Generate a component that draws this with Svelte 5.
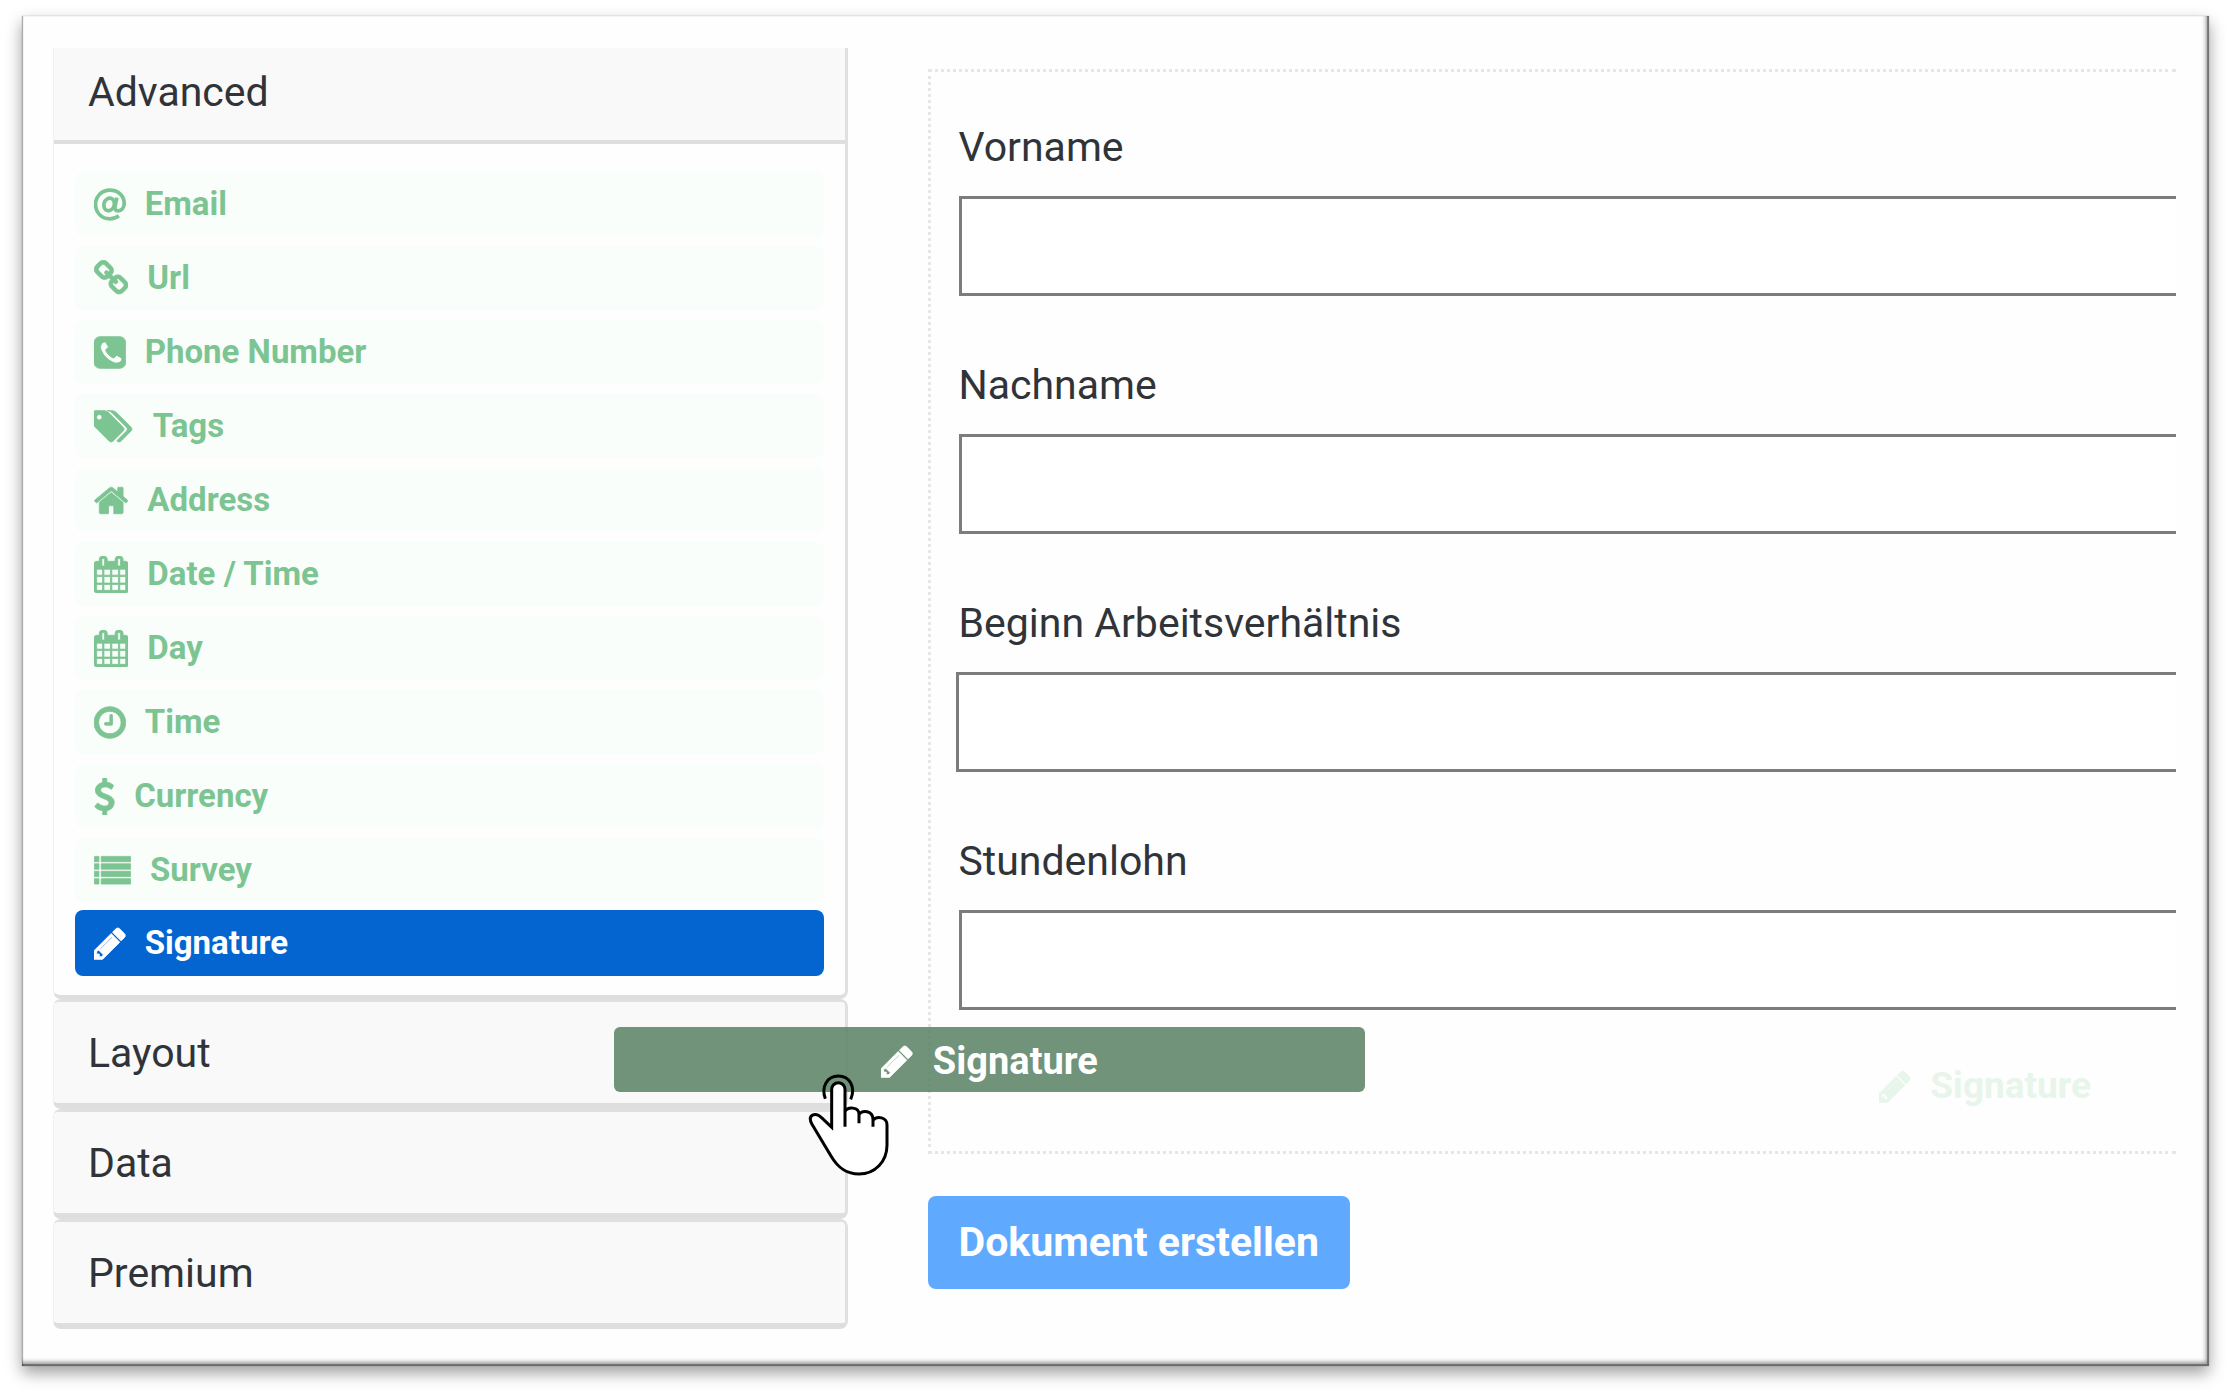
<script lang="ts">
  /** Form builder: component palette on the left, drop area on the right */

  interface Icon {
    box: string;
    path: string;
  }

  const calendar: Icon = {
    box: '64 0 1664 1792',
    path: 'M192 1664h288v-288h-288v288zm352 0h320v-288h-320v288zm-352-352h288v-320h-288v320zm352 0h320v-320h-320v320zm-352-384h288v-288h-288v288zm736 736h320v-288h-320v288zm-384-736h320v-288h-320v288zm768 736h288v-288h-288v288zm-384-352h320v-320h-320v320zm-352-864v-288q0-13-9.5-22.5t-22.5-9.5h-64q-13 0-22.5 9.5t-9.5 22.5v288q0 13 9.5 22.5t22.5 9.5h64q13 0 22.5-9.5t9.5-22.5zm736 864h288v-320h-288v320zm-384-384h320v-288h-320v288zm384 0h288v-288h-288v288zm32-480v-288q0-13-9.5-22.5t-22.5-9.5h-64q-13 0-22.5 9.5t-9.5 22.5v288q0 13 9.5 22.5t22.5 9.5h64q13 0 22.5-9.5t9.5-22.5zm384-64v1280q0 52-38 90t-90 38h-1408q-52 0-90-38t-38-90v-1280q0-52 38-90t90-38h128v-96q0-66 47-113t113-47h64q66 0 113 47t47 113v96h384v-96q0-66 47-113t113-47h64q66 0 113 47t47 113v96h128q52 0 90 38t38 90z',
  };

  const pencil: Icon = {
    box: '128 0 1536 1792',
    path: 'M491 1536l91-91-235-235-91 91v107h128v128h107zm523-928q0-22-22-22-10 0-17 7l-542 542q-7 7-7 17 0 22 22 22 10 0 17-7l542-542q7-7 7-17zm-54-192l416 416-832 832h-416v-416zm683 96q0 53-37 90l-166 166-416-416 166-165q36-38 90-38 53 0 91 38l235 234q37 39 37 91z',
  };

  // The at sign is stroked instead of filled, so it has no path here
  const at: Icon = { box: '128 0 1536 1792', path: '' };

  const link: Icon = {
    box: '64 0 1664 1792',
    path: 'M1520 1216q0-40-28-68l-208-208q-28-28-68-28-42 0-72 32 3 3 19 18.5t21.5 21.5 15 19 13 25.5 3.5 27.5q0 40-28 68t-68 28q-15 0-27.5-3.5t-25.5-13-19-15-21.5-21.5-18.5-19q-33 31-33 73 0 40 28 68l206 207q27 27 68 27 40 0 68-26l147-146q28-28 28-67zm-703-705q0-40-28-68l-206-207q-28-28-68-28-39 0-68 27l-147 146q-28 28-28 67 0 40 28 68l208 208q27 27 68 27 42 0 72-31-3-3-19-18.5t-21.5-21.5-15-19-13-25.5-3.5-27.5q0-40 28-68t68-28q15 0 27.5 3.5t25.5 13 19 15 21.5 21.5 18.5 19q33-31 33-73zm895 705q0 120-85 203l-147 146q-83 83-203 83-121 0-204-85l-206-207q-83-83-83-203 0-123 88-209l-88-88q-86 88-208 88-120 0-204-84l-208-208q-84-84-84-204t85-203l147-146q83-83 203-83 121 0 204 85l206 207q83 83 83 203 0 123-88 209l88 88q86-88 208-88 120 0 204 84l208 208q84 84 84 204z',
  };

  const phone: Icon = {
    box: '128 0 1536 1792',
    path: 'M1472 1193q0-11-2-16-3-8-38.5-29.5t-88.5-49.5l-53-29q-5-3-19-13t-25-15-21-5q-18 0-47 32.5t-57 65.5-44 33q-7 0-16.5-3.5t-15.5-6.5-17-9.5-14-8.5q-99-55-170.5-126.5t-126.5-170.5q-2-3-8.5-14t-9.5-17-6.5-15.5-3.5-16.5q0-13 20.5-33.5t45-38.5 45-39.5 20.5-36.5q0-10-5-21t-15-25-13-19q-3-6-15-28.5t-25-45.5-26.5-47.5-25-40.5-16.5-18-16-2q-48 0-101 22-46 21-80 94.5t-34 130.5q0 16 2.5 34t5 30.5 9 33 10 29.5 12.5 33 11 30q60 164 216.5 320.5t320.5 216.5q6 2 30 11t33 12.5 29.5 10 33 9 30.5 5 34 2.5q57 0 130.5-34t94.5-80q22-53 22-101zm192-777v960q0 119-84.5 203.5t-203.5 84.5h-960q-119 0-203.5-84.5t-84.5-203.5v-960q0-119 84.5-203.5t203.5-84.5h960q119 0 203.5 84.5t84.5 203.5z',
  };

  const tags: Icon = {
    box: '0 0 1920 1792',
    path: 'M384 448q0-53-37.5-90.5t-90.5-37.5-90.5 37.5-37.5 90.5 37.5 90.5 90.5 37.5 90.5-37.5 37.5-90.5zm1067 576q0 53-37 90l-491 492q-39 37-91 37-53 0-90-37l-715-716q-38-37-64.5-101t-26.5-117v-416q0-52 38-90t90-38h416q53 0 117 26.5t102 64.5l715 714q37 39 37 91zm384 0q0 53-37 90l-491 492q-39 37-91 37-36 0-59-14t-53-45l470-470q37-37 37-90 0-52-37-91l-715-714q-38-38-102-64.5t-117-26.5h224q53 0 117 26.5t102 64.5l715 714q37 39 37 91z',
  };

  const home: Icon = {
    box: '64 0 1664 1792',
    path: 'M1472 992v480q0 26-19 45t-45 19h-384v-384h-256v384h-384q-26 0-45-19t-19-45v-480q0-1 .5-3t.5-3l575-474 575 474q1 2 1 6zm223-69l-62 74q-8 9-21 11h-3q-13 0-21-7l-692-577-692 577q-12 8-24 7-13-2-21-11l-62-74q-8-10-7-23.5t11-21.5l719-599q32-26 76-26t76 26l244 204v-195q0-14 9-23t23-9h192q14 0 23 9t9 23v408l219 182q10 8 11 21.5t-7 23.5z',
  };

  const clock: Icon = {
    box: '128 0 1536 1792',
    path: 'M1024 544v448q0 14-9 23t-23 9h-320q-14 0-23-9t-9-23v-64q0-14 9-23t23-9h224v-352q0-14 9-23t23-9h64q14 0 23 9t9 23zm416 352q0-148-73-273t-198-198-273-73-273 73-198 198-73 273 73 273 198 198 273 73 273-73 198-198 73-273zm224 0q0 209-103 385.5t-279.5 279.5-385.5 103-385.5-103-279.5-279.5-103-385.5 103-385.5 279.5-279.5 385.5-103 385.5 103 279.5 279.5 103 385.5z',
  };

  const dollar: Icon = {
    box: '384 0 1024 1792',
    path: 'M1362 1185q0 153-99.5 263.5t-258.5 136.5v175q0 14-9 23t-23 9h-135q-13 0-22.5-9.5t-9.5-22.5v-175q-66-9-127.5-31t-101.5-44.5-74-48-46.5-37.5-17.5-18q-17-21-2-41l103-135q7-10 23-12 15-2 24 9l2 2q113 99 243 125 37 8 74 8 81 0 142.5-43t61.5-122q0-28-15-53t-33.5-42-58.5-37.5-66-32-80-32.5q-39-16-61.5-25t-61.5-26.5-62.5-31-56.5-35.5-53.5-42.5-43.5-49-35.5-58-21-66.5-8.5-78q0-138 98-242t255-134v-180q0-13 9.5-22.5t22.5-9.5h135q14 0 23 9t9 23v176q57 6 110.5 23t87 33.5 63.5 37.5 39 29 15 14q17 18 5 38l-81 146q-8 15-23 16-14 3-27-7-3-3-14.5-12t-39-26.5-58.5-32-74.5-26-85.5-11.5q-95 0-155 43t-60 111q0 26 8.5 48t29.5 41.5 39.5 33 56 31 60.5 27 70 27.5q53 20 81 31.5t76 35 75.5 42.5 62 50 53 63.5 31.5 76.5 13 94z',
  };

  const list: Icon = {
    box: '0 0 1792 1792',
    path: 'M20 212h220v260h-220zM20 572h220v260h-220zM20 932h220v260h-220zM20 1292h220v260h-220zM350 212h1422v260h-1422zM350 572h1422v260h-1422zM350 932h1422v260h-1422zM350 1292h1422v260h-1422z',
  };

  const components = [
    { label: 'Email', icon: at },
    { label: 'Url', icon: link },
    { label: 'Phone Number', icon: phone },
    { label: 'Tags', icon: tags },
    { label: 'Address', icon: home },
    { label: 'Date / Time', icon: calendar },
    { label: 'Day', icon: calendar },
    { label: 'Time', icon: clock },
    { label: 'Currency', icon: dollar },
    { label: 'Survey', icon: list },
    { label: 'Signature', icon: pencil },
  ];

  const groups = ['Layout', 'Data', 'Premium'];

  const fields = [
    { id: 'vorname', label: 'Vorname' },
    { id: 'nachname', label: 'Nachname' },
    { id: 'beginn', label: 'Beginn Arbeitsverhältnis', wide: true },
    { id: 'stundenlohn', label: 'Stundenlohn' },
  ];

  let selected = $state('Signature');
</script>

{#snippet glyph(icon: Icon)}
  <svg class="icon" viewBox={icon.box} aria-hidden="true">
    {#if icon.path}
      <path d={icon.path} />
    {:else}
      <g fill="none" stroke-width="180">
        <path d="M1330 1440C1200 1540 1060 1590 896 1590C500 1590 203 1290 203 896S500 203 896 203S1589 470 1589 840C1589 1060 1460 1200 1290 1200C1160 1200 1120 1110 1150 980L1235 560" />
        <ellipse cx="860" cy="890" rx="250" ry="310" transform="rotate(18 860 890)" />
      </g>
    {/if}
  </svg>
{/snippet}

<div class="frame">
  <aside class="sidebar">
    <section class="group group--open">
      <button class="group__header group__header--open" type="button">Advanced</button>
      <div class="group__body">
        {#each components as item}
          <button
            class="component"
            class:component--selected={selected === item.label}
            type="button"
            onclick={() => (selected = item.label)}
          >
            {@render glyph(item.icon)}
            <span>{item.label}</span>
          </button>
        {/each}
      </div>
    </section>
    {#each groups as group}
      <section class="group">
        <button class="group__header" type="button">{group}</button>
      </section>
    {/each}
  </aside>

  <main class="builder">
    <form class="drop-area">
      {#each fields as field}
        <div class="field">
          <label for={field.id}>{field.label}</label>
          <input id={field.id} class:wide={field.wide} type="text" />
        </div>
      {/each}
      <div class="placeholder">
        {@render glyph(pencil)}
        <span>Signature</span>
      </div>
    </form>
    <button class="submit" type="button">Dokument erstellen</button>
  </main>

  <!-- Component that is being dragged, with the pointer on it -->
  <div class="dragged">
    {@render glyph(pencil)}
    <span>Signature</span>
    <svg class="pointer" viewBox="80 70 249 312" aria-hidden="true">
      <path
        fill="#fff"
        stroke="none"
        d="M154 233V119a20 20 0 0 1 40 0V186c8-16 42-15 42 8c10-14 42-12 42 16c10-12 42-10 42 16V286c0 50-36 87-84 87c-40 0-64-20-84-54L95 224C80 196 104 184 126 206z"
      />
      <path d="M135 147C122 112 140 79 174 79S227 112 211 149" />
      <path d="M194 231V119a20 20 0 0 0-40 0V233L126 206C104 184 80 196 95 224L152 319C172 353 196 373 236 373c48 0 84-37 84-87V226c0-24-30-28-42-14M194 186c8-16 42-15 42 8V221M236 194c10-14 42-12 42 16V231" />
    </svg>
  </div>
</div>

<style>
  :global(body) {
    background: #fff;
    font-family: Roboto, sans-serif;
    color: #303439;
  }

  button {
    border: none;
    font-family: inherit;
    color: inherit;
    cursor: pointer;
  }

  .frame {
    position: relative;
    display: grid;
    grid-template-columns: 7fr 11fr;
    gap: 80px;
    margin: 16px 22px 28px;
    padding: 32px 33px 37px 31px;
    background: #fefefe;
    box-shadow:
      0 7px 15px rgba(0, 0, 0, 0.38),
      0 0 1px rgba(0, 0, 0, 0.3),
      inset 1px 0 1px rgba(0, 0, 0, 0.35),
      inset -2px -2px 0 rgba(0, 0, 0, 0.3),
      inset -3px -4px 4px rgba(0, 0, 0, 0.4);
  }

  /* Sidebar */
  .group {
    border: 1px solid #f0f0f0;
    border-top: 3px solid #e0e0e0;
    border-right: 3px solid #e0e0e0;
    border-bottom: 6px solid #dedede;
    border-radius: 8px;
  }

  .group--open {
    border-top: none;
    border-bottom-width: 4px;
    border-radius: 0 0 8px 8px;
  }

  .group__header {
    display: block;
    width: 100%;
    padding: 27px 34px 26px;
    border-radius: 4px;
    background: #f9f9f9;
    font-size: 41px;
    line-height: 48px;
    text-align: left;
  }

  .group__header--open {
    padding: 20px 34px 24px;
    border-bottom: 4px solid #dedede;
    border-radius: 0;
  }

  .group__body {
    display: flex;
    flex-direction: column;
    gap: 10px;
    padding: 28px 21px 19px;
  }

  .component {
    display: flex;
    align-items: center;
    gap: 19px;
    height: 64px;
    padding: 0 19px;
    border-radius: 8px;
    background: #fafefb;
    color: #7dc493;
    font-size: 33px;
    font-weight: 700;
    line-height: 40px;
  }

  .component--selected {
    height: 66px;
    margin-top: -2px;
    background: #0465d0;
    color: #fff;
  }

  .icon {
    flex: none;
    height: 37px;
    fill: currentColor;
    stroke: currentColor;
    stroke-width: 40;
  }

  /* Builder */
  .builder {
    min-width: 0;
    margin-top: 21px;
  }

  .drop-area {
    display: flex;
    flex-direction: column;
    gap: 65px;
    padding: 51px 0 41px 28px;
    border: 3px dotted #e6e6e6;
    border-right: none;
  }

  .field {
    display: flex;
    flex-direction: column;
    gap: 25px;
  }

  .field label {
    font-size: 41px;
    line-height: 48px;
  }

  .field input {
    box-sizing: border-box;
    height: 100px;
    padding: 0 20px;
    border: 3px solid #7c7c7c;
    border-right: none;
    background: #fff;
    font: inherit;
    font-size: 41px;
  }

  .field input.wide {
    margin-left: -3px;
  }

  .placeholder {
    display: flex;
    align-items: center;
    justify-content: flex-end;
    gap: 20px;
    margin-top: -13px;
    padding-right: 85px;
    color: #e8f5ea;
    font-size: 37px;
    font-weight: 700;
    line-height: 48px;
  }

  .submit {
    margin-top: 42px;
    padding: 22px 31px 23px;
    border-radius: 8px;
    background: #5fa9ff;
    color: #fff;
    font-size: 41px;
    font-weight: 700;
    line-height: 48px;
  }

  /* Drag layer */
  .dragged {
    position: absolute;
    top: 1011px;
    left: 592px;
    box-sizing: border-box;
    display: flex;
    align-items: center;
    justify-content: center;
    gap: 20px;
    width: 751px;
    height: 65px;
    padding-top: 3px;
    border-radius: 6px;
    background: rgba(92, 132, 104, 0.88);
    color: #fff;
    font-size: 38px;
    font-weight: 700;
    line-height: 48px;
  }

  .pointer {
    position: absolute;
    top: 46px;
    left: 193px;
    width: 83px;
    height: 104px;
    fill: none;
    stroke: #000;
    stroke-width: 9;
  }
</style>
